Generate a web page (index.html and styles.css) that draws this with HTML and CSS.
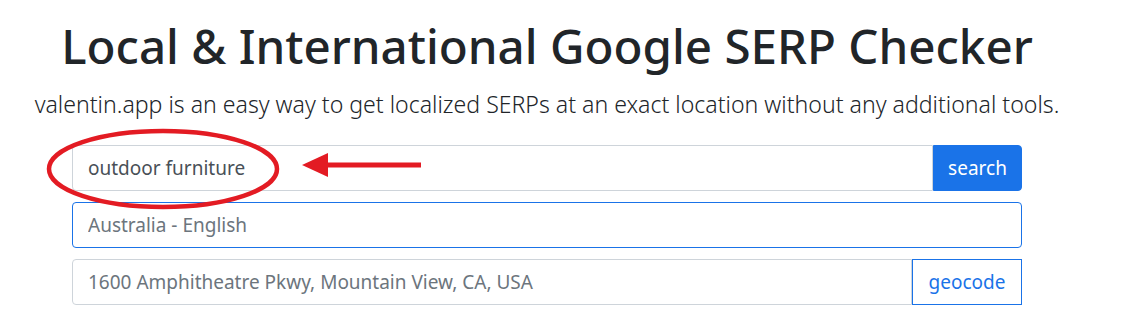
FILE: index.html
```html
<!DOCTYPE html>
<html lang="en">

<head>
    <meta charset="UTF-8">
    <meta name="viewport" content="width=device-width, initial-scale=1.0">
    <title>Local &amp; International Google SERP Checker</title>
    <link rel="stylesheet" href="styles.css">
</head>

<body>
    <main class="page">
        <h1 class="title">Local &amp; International Google SERP Checker</h1>
        <p class="lead">valentin.app is an easy way to get localized SERPs at an exact location without any additional tools.</p>

        <form class="search-form">
            <div class="input-group">
                <input type="text" class="form-control" value="outdoor furniture">
                <button type="button" class="btn btn-primary">search</button>
            </div>
            <div class="input-group">
                <input type="text" class="form-control focused" placeholder="Australia - English">
            </div>
            <div class="input-group">
                <input type="text" class="form-control" placeholder="1600 Amphitheatre Pkwy, Mountain View, CA, USA">
                <button type="button" class="btn btn-outline">geocode</button>
            </div>

            <!-- annotation drawn on top of the screenshot -->
            <svg class="markup" width="400" height="100" viewBox="0 0 400 100">
                <ellipse cx="117" cy="41" rx="114" ry="38" fill="none" stroke="#e31b23" stroke-width="4.5" />
                <line x1="278" y1="37" x2="375" y2="37" stroke="#e31b23" stroke-width="5" />
                <polygon points="256,37 282,25 282,49" fill="#e31b23" />
            </svg>
        </form>
    </main>
</body>

</html>
```

FILE: styles.css
```css
body {
    margin: 0;
    background: #fff;
    color: #212529;
    font-family: 'Noto Sans', 'Open Sans', sans-serif;
}

.page {
    width: 1094px;
    text-align: center;
    padding-top: 17px;
}

.title {
    margin: 0;
    font-size: 47.5px;
    font-weight: 500;
    line-height: 1.2;
}

.lead {
    margin: 13px 0 0;
    font-size: 23.1px;
    font-weight: 300;
    line-height: 1.5;
    white-space: nowrap;
}

.search-form {
    position: relative;
    width: 950px;
    margin: 23px auto 0;
    display: flex;
    flex-direction: column;
    gap: 11px;
}

.input-group {
    display: flex;
    height: 46px;
}

.form-control {
    flex: 1;
    min-width: 0;
    margin: 0;
    padding: 0 15px;
    border: 1px solid #ced4da;
    border-radius: 4px;
    font-family: inherit;
    font-size: 19px;
    color: #495057;
    outline: none;
}

.form-control::placeholder {
    color: #6c757d;
}

.form-control.focused {
    border-color: #1a73e8;
}

.input-group .form-control:not(:last-child) {
    border-top-right-radius: 0;
    border-bottom-right-radius: 0;
}

.btn {
    margin: 0;
    padding: 0;
    font-family: inherit;
    font-size: 19px;
    cursor: pointer;
}

.btn-primary {
    width: 89px;
    background: #1a73e8;
    color: #fff;
    border: 1px solid #1a73e8;
    border-radius: 0 4px 4px 0;
}

.btn-outline {
    width: 110px;
    background: #fff;
    color: #1a73e8;
    border: 1px solid #1a73e8;
    border-radius: 0;
}

.markup {
    position: absolute;
    left: -26px;
    top: -17px;
    pointer-events: none;
}
```
